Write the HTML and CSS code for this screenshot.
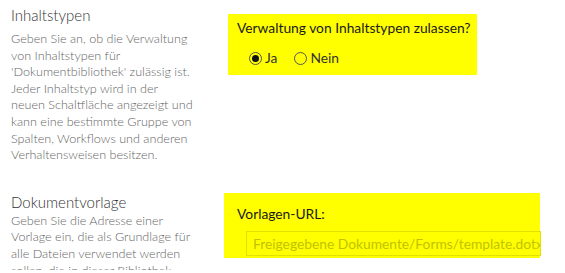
FILE: index.html
```html
<!DOCTYPE html>
<html lang="de">
<head>
<meta charset="utf-8">
<title>Bibliothekseinstellungen</title>
<link rel="stylesheet" href="styles.css">
</head>
<body>
<div class="page">
  <section class="row row-types">
    <div class="desc-col">
      <h3 class="heading">Inhaltstypen</h3>
      <p class="desc">Geben Sie an, ob die Verwaltung<br>von Inhaltstypen für<br>'Dokumentbibliothek' zulässig ist.<br>Jeder Inhaltstyp wird in der<br>neuen Schaltfläche angezeigt und<br>kann eine bestimmte Gruppe von<br>Spalten, Workflows und anderen<br>Verhaltensweisen besitzen.</p>
    </div>
    <div class="field box box-types">
      <div class="label">Verwaltung von Inhaltstypen zulassen?</div>
      <div class="radios">
        <label class="radio"><input type="radio" name="ct" checked><span>Ja</span></label>
        <label class="radio"><input type="radio" name="ct"><span>Nein</span></label>
      </div>
    </div>
  </section>
  <section class="row row-template">
    <div class="desc-col">
      <h3 class="heading heading-2">Dokumentvorlage</h3>
      <p class="desc desc-2">Geben Sie die Adresse einer<br>Vorlage ein, die als Grundlage für<br>alle Dateien verwendet werden<br>sollen, die in dieser Bibliothek<br>erstellt werden.</p>
    </div>
    <div class="field box box-template">
      <div class="label">Vorlagen-URL:</div>
      <input class="url" type="text" value="Freigegebene Dokumente/Forms/template.dotx">
    </div>
  </section>
</div>
</body>
</html>
```

FILE: styles.css
```css
html, body {
  margin: 0;
  padding: 0;
  background: #fff;
  overflow: hidden;
}
body {
  font-family: Lato, "Open Sans", sans-serif;
  width: 565px;
  height: 273px;
}
.page {
  padding: 0 0 0 11px;
  height: 270px;
  overflow: hidden;
}
.row {
  display: flex;
  align-items: flex-start;
}
.desc-col {
  width: 210px;
  flex: none;
}
.heading {
  margin: 0;
  padding-top: 5px;
  font-size: 15px;
  line-height: 20px;
  font-weight: 300;
  color: #333;
  white-space: nowrap;
}
.desc {
  margin: 6px 0 0 0;
  font-size: 12.6px;
  line-height: 16.6px;
  font-weight: 300;
  color: #666;
  white-space: nowrap;
}
.row-template {
  margin-top: 29px;
}
.heading-2 {
  padding-top: 0;
  margin-top: -1px;
}
.desc-2 {
  margin-top: 1px;
}
.box {
  background: #ffff00;
  color: #1a1a1a;
}
.label {
  font-size: 13.8px;
  line-height: 18px;
  white-space: nowrap;
}
.box-types {
  margin: 14px 0 0 7px;
  width: 249px;
  height: 61px;
  padding: 5px 0 0 9px;
  box-sizing: border-box;
}
.radios {
  display: flex;
  gap: 17px;
  margin: 12px 0 0 12px;
}
.radio {
  display: flex;
  align-items: center;
  gap: 3px;
  font-size: 13.8px;
  line-height: 18px;
  color: #333;
}
.radio input {
  appearance: none;
  -webkit-appearance: none;
  margin: 0;
  width: 13px;
  height: 13px;
  border: 1px solid #555;
  border-radius: 50%;
  box-sizing: border-box;
  display: grid;
  place-items: center;
}
.radio input:checked::before {
  content: "";
  width: 7px;
  height: 7px;
  border-radius: 50%;
  background: #111;
}
.box-template {
  margin: 0 0 0 3px;
  width: 316px;
  height: 65px;
  padding: 12px 0 0 13px;
  box-sizing: border-box;
}
.url {
  display: block;
  margin: 8px -1px 0 9px;
  width: 295px;
  height: 25px;
  box-sizing: border-box;
  border: 1px solid #e2e200;
  background: transparent;
  font-family: Lato, "Open Sans", sans-serif;
  font-size: 13.8px;
  color: #c2c200;
  padding: 0 0 0 6px;
  outline: none;
}
```
